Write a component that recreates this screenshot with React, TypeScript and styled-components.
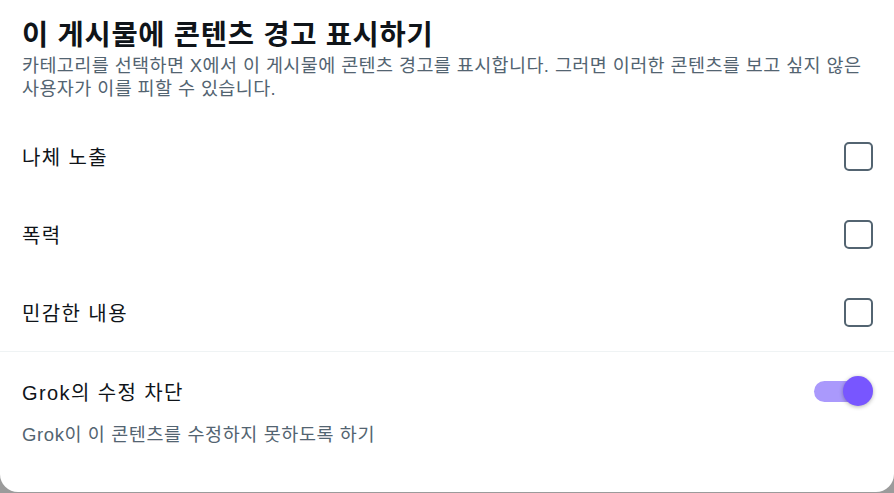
import React from "react";
import styled, { createGlobalStyle } from "styled-components";

const Global = createGlobalStyle`
  html, body { margin: 0; padding: 0; }
  body {
    background: #9b9b9b;
    font-family: "Liberation Sans", "Noto Sans CJK KR", sans-serif;
    word-break: keep-all;
    -webkit-font-smoothing: antialiased;
  }
`;

const Card = styled.div`
  width: 894px;
  height: 492px;
  background: #ffffff;
  border-radius: 0 0 18px 18px;
  overflow: hidden;
  display: flex;
  flex-direction: column;
  box-sizing: border-box;
`;

const Header = styled.div`
  padding: 18px 22px 0 22px;
  display: flex;
  flex-direction: column;
`;

const Title = styled.h1`
  margin: 0;
  font-family: "Liberation Sans", "Noto Sans CJK KR", sans-serif;
  font-weight: 700;
  font-size: 28.5px;
  line-height: 34px;
  letter-spacing: 0.7px;
  color: #0f1419;
`;

const Subtitle = styled.p`
  margin: 2px 0 0 0;
  font-size: 18.5px;
  line-height: 23px;
  letter-spacing: 0.4px;
  word-break: keep-all;
  color: #536471;
`;

const List = styled.div`
  margin-top: 17px;
  display: flex;
  flex-direction: column;
`;

const Row = styled.label`
  height: 78px;
  padding: 0 21px 0 22px;
  display: flex;
  align-items: center;
  justify-content: space-between;
  box-sizing: border-box;
`;

const Label = styled.span`
  font-size: 20px;
  letter-spacing: 1.4px;
  color: #0f1419;
`;

const Box = styled.span`
  width: 29px;
  height: 29px;
  box-sizing: border-box;
  border: 2.5px solid #536471;
  border-radius: 5px;
`;

const Divider = styled.div`
  height: 1px;
  background: #eff3f4;
`;

const GrokSection = styled.div`
  padding: 21px 21px 0 22px;
  display: flex;
  flex-direction: column;
`;

const GrokRow = styled.div`
  height: 36px;
  display: flex;
  align-items: center;
  justify-content: space-between;
`;

const GrokHint = styled.span`
  margin-top: 14px;
  font-size: 18.5px;
  line-height: 24px;
  letter-spacing: 0.6px;
  color: #536471;
`;

const Switch = styled.span`
  position: relative;
  width: 59px;
  height: 30px;
  display: inline-block;
`;

const Track = styled.span`
  position: absolute;
  left: 0;
  top: 5px;
  width: 46px;
  height: 21px;
  border-radius: 11px;
  background: #aa99fc;
`;

const Knob = styled.span`
  position: absolute;
  right: 0;
  top: 0;
  width: 30px;
  height: 30px;
  border-radius: 50%;
  background: #7856ff;
  box-shadow: 0 1px 4px rgba(0, 0, 0, 0.3);
`;

const items = ["나체 노출", "폭력", "민감한 내용"];

export default function App() {
  return (
    <>
      <Global />
      <Card>
        <Header>
          <Title>이 게시물에 콘텐츠 경고 표시하기</Title>
          <Subtitle>
            카테고리를 선택하면 X에서 이 게시물에 콘텐츠 경고를 표시합니다. 그러면 이러한 콘텐츠를 보고 싶지 않은
            사용자가 이를 피할 수 있습니다.
          </Subtitle>
        </Header>
        <List>
          {items.map((t) => (
            <Row key={t}>
              <Label>{t}</Label>
              <Box />
            </Row>
          ))}
        </List>
        <Divider />
        <GrokSection>
          <GrokRow>
            <Label>Grok의 수정 차단</Label>
            <Switch>
              <Track />
              <Knob />
            </Switch>
          </GrokRow>
          <GrokHint>Grok이 이 콘텐츠를 수정하지 못하도록 하기</GrokHint>
        </GrokSection>
      </Card>
    </>
  );
}
